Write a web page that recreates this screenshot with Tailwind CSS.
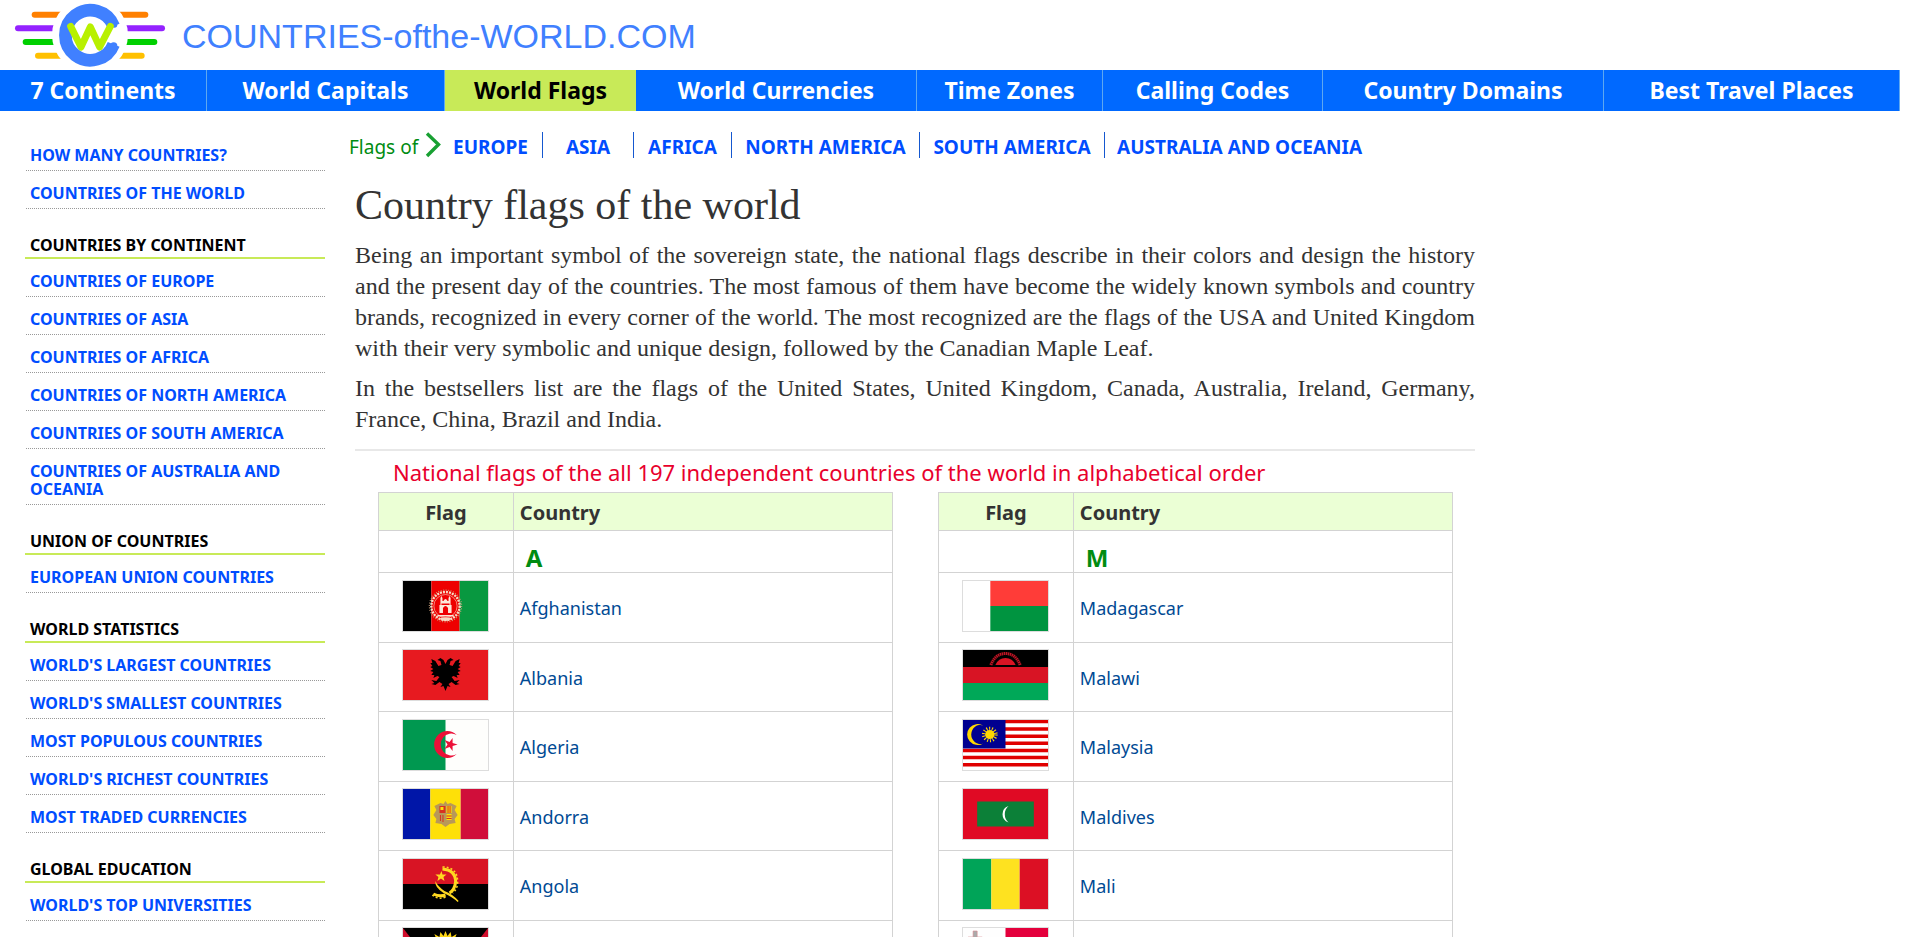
<!DOCTYPE html>
<html lang="en">
<head>
<meta charset="utf-8">
<meta name="viewport" content="width=device-width, initial-scale=1">
<title>Country flags of the world</title>
<script src="https://cdn.jsdelivr.net/npm/@tailwindcss/browser@4"></script>
</head>
<body class="bg-white font-['Noto_Sans',sans-serif] text-[#333]">

<header>
  <a href="#" class="flex h-[70px] items-center gap-0.5 text-[#4080ff]">
    <svg class="h-[70px] w-[180px] shrink-0" viewBox="0 0 540 210" aria-hidden="true">
      <g fill="none" stroke-width="18" stroke-linecap="round">
        <path stroke="#ff8000" d="M104 44H436"/>
        <path stroke="#9422ff" d="M54 85H486"/>
        <path stroke="#00d000" d="M77 126H463"/>
        <path stroke="#ffc000" d="M114 167H425"/>
      </g>
      <circle cx="270" cy="105" r="114" fill="#fff"/>
      <path d="M341 78A75 75 0 1 0 341 133" fill="none" stroke="#4080ff" stroke-width="38"/>
      <circle cx="343" cy="74" r="9" fill="#4080ff"/><circle cx="341" cy="138" r="11" fill="#4080ff"/>
      <path d="M212 79L243 141L271 81L299 141L331 79" fill="none" stroke="#b8f000" stroke-width="21" stroke-linecap="round" stroke-linejoin="round"/>
    </svg>
    <span class="pt-0.5 font-['Liberation_Sans',sans-serif] text-[34px] leading-[38px]">COUNTRIES-ofthe-WORLD.COM</span>
  </a>
  <nav class="mr-5 grid h-[41px] grid-cols-[207fr_238fr_191fr_281fr_186fr_220fr_281fr_296fr] bg-[#0069ff] text-center text-[23px] leading-[41px] font-bold whitespace-nowrap text-white">
    <a href="#" class="border-r border-[#5ea8f0]">7 Continents</a>
    <a href="#" class="border-r border-[#5ea8f0]">World Capitals</a>
    <a href="#" class="bg-[#c8ea58] text-black">World Flags</a>
    <a href="#" class="border-r border-[#5ea8f0]">World Currencies</a>
    <a href="#" class="border-r border-[#5ea8f0]">Time Zones</a>
    <a href="#" class="border-r border-[#5ea8f0]">Calling Codes</a>
    <a href="#" class="border-r border-[#5ea8f0]">Country Domains</a>
    <a href="#" class="border-r border-[#5ea8f0]">Best Travel Places</a>
  </nav>
</header>

<div class="flex items-start gap-[30px] pl-[25px]">
  <aside class="w-[300px] shrink-0 pt-[22px] text-[16px] leading-[18px] font-bold text-[#004dff]">
    <ul>
      <li class="ml-px border-b border-dotted border-[#999] pt-[13px] pb-1.5 pl-1"><a href="#">HOW MANY COUNTRIES?</a></li>
      <li class="ml-px border-b border-dotted border-[#999] pt-[13px] pb-1.5 pl-1"><a href="#">COUNTRIES OF THE WORLD</a></li>
    </ul>
    <h2 class="border-b-2 border-[#c8ea58] pt-[27px] pb-[3px] pl-[5px] text-black">COUNTRIES BY CONTINENT</h2>
    <ul>
      <li class="ml-px border-b border-dotted border-[#999] pt-[13px] pb-1.5 pl-1"><a href="#">COUNTRIES OF EUROPE</a></li>
      <li class="ml-px border-b border-dotted border-[#999] pt-[13px] pb-1.5 pl-1"><a href="#">COUNTRIES OF ASIA</a></li>
      <li class="ml-px border-b border-dotted border-[#999] pt-[13px] pb-1.5 pl-1"><a href="#">COUNTRIES OF AFRICA</a></li>
      <li class="ml-px border-b border-dotted border-[#999] pt-[13px] pb-1.5 pl-1"><a href="#">COUNTRIES OF NORTH AMERICA</a></li>
      <li class="ml-px border-b border-dotted border-[#999] pt-[13px] pb-1.5 pl-1"><a href="#">COUNTRIES OF SOUTH AMERICA</a></li>
      <li class="ml-px border-b border-dotted border-[#999] pt-[13px] pb-1.5 pl-1"><a href="#">COUNTRIES OF AUSTRALIA AND<br>OCEANIA</a></li>
    </ul>
    <h2 class="border-b-2 border-[#c8ea58] pt-[27px] pb-[3px] pl-[5px] text-black">UNION OF COUNTRIES</h2>
    <ul>
      <li class="ml-px border-b border-dotted border-[#999] pt-[13px] pb-1.5 pl-1"><a href="#">EUROPEAN UNION COUNTRIES</a></li>
    </ul>
    <h2 class="border-b-2 border-[#c8ea58] pt-[27px] pb-[3px] pl-[5px] text-black">WORLD STATISTICS</h2>
    <ul>
      <li class="ml-px border-b border-dotted border-[#999] pt-[13px] pb-1.5 pl-1"><a href="#">WORLD'S LARGEST COUNTRIES</a></li>
      <li class="ml-px border-b border-dotted border-[#999] pt-[13px] pb-1.5 pl-1"><a href="#">WORLD'S SMALLEST COUNTRIES</a></li>
      <li class="ml-px border-b border-dotted border-[#999] pt-[13px] pb-1.5 pl-1"><a href="#">MOST POPULOUS COUNTRIES</a></li>
      <li class="ml-px border-b border-dotted border-[#999] pt-[13px] pb-1.5 pl-1"><a href="#">WORLD'S RICHEST COUNTRIES</a></li>
      <li class="ml-px border-b border-dotted border-[#999] pt-[13px] pb-1.5 pl-1"><a href="#">MOST TRADED CURRENCIES</a></li>
    </ul>
    <h2 class="border-b-2 border-[#c8ea58] pt-[27px] pb-[3px] pl-[5px] text-black">GLOBAL EDUCATION</h2>
    <ul>
      <li class="ml-px border-b border-dotted border-[#999] pt-[13px] pb-1.5 pl-1"><a href="#">WORLD'S TOP UNIVERSITIES</a></li>
    </ul>
  </aside>

  <main class="max-w-[1120px] flex-1 pt-[21px]">
    <nav class="-ml-1.5 flex h-[26px] text-[19px] leading-[30px] font-bold whitespace-nowrap text-[#004dff]">
      <span class="w-[76px] font-normal text-[#008c12]">Flags of</span>
      <svg class="h-[26px] w-4 shrink-0" viewBox="0 0 16 26" fill="none" stroke="#18a032" stroke-width="3.4" aria-hidden="true"><path d="M2 1.500L13.500 12.500L2 24"/></svg>
      <a href="#" class="w-[102px] border-r border-[#1558d0] pl-3">EUROPE</a>
      <a href="#" class="w-[91px] border-r border-[#1558d0] text-center">ASIA</a>
      <a href="#" class="w-[98px] border-r border-[#1558d0] text-center">AFRICA</a>
      <a href="#" class="w-[188px] border-r border-[#1558d0] text-center">NORTH AMERICA</a>
      <a href="#" class="w-[185px] border-r border-[#1558d0] text-center">SOUTH AMERICA</a>
      <a href="#" class="pl-3">AUSTRALIA AND OCEANIA</a>
    </nav>

    <div class="font-['Liberation_Serif',serif]">
      <h1 class="mt-[23px] text-[42px] leading-[48px]">Country flags of the world</h1>
      <div class="mt-[11px] flex flex-col gap-[9px] text-justify text-[24px] leading-[31px]">
        <p>Being an important symbol of the sovereign state, the national flags describe in their colors and design the history and the present day of the countries. The most famous of them have become the widely known symbols and country brands, recognized in every corner of the world. The most recognized are the flags of the USA and United Kingdom with their very symbolic and unique design, followed by the Canadian Maple Leaf.</p>
        <p>In the bestsellers list are the flags of the United States, United Kingdom, Canada, Australia, Ireland, Germany, France, China, Brazil and India.</p>
      </div>
    </div>
    <hr class="mt-[14px] border-t-2 border-[#e8e8e8]">
    <h2 class="mt-1.5 mb-[5px] pl-[38px] text-[22px] leading-[30px] text-[#e8002c]">National flags of the all 197 independent countries of the world in alphabetical order</h2>

    <div class="flex items-start gap-[45px] pr-[22px] pl-[23px]">
      <table class="flex-1 table-fixed border-collapse text-[18px]">
        <thead>
          <tr class="h-[38px] bg-[#ebffd5] text-[20px] leading-7">
            <th class="w-[135px] border border-[#d3d3d3] pt-0.5">Flag</th>
            <th class="w-[380px] border border-[#d3d3d3] pt-0.5 pl-1.5 text-left">Country</th>
          </tr>
        </thead>
        <tbody class="text-[#004a94]">
          <tr class="h-[42px]"><td class="border border-[#d3d3d3]"></td><td class="border border-[#d3d3d3] pt-3 pl-3 text-[24px] leading-7 font-bold text-[#008c12]">A</td></tr>
          <tr class="h-[70px]">
            <td class="border border-[#d3d3d3] pb-1"><svg class="mx-auto h-[52px] w-[87px] border border-[#ddd]" viewBox="0 0 84 50" preserveAspectRatio="none" role="img" aria-label="Flag of Afghanistan">
              <path d="M0 0H28V50H0z"/><path fill="#ee0000" d="M28 0H56V50H28z"/><path fill="#089840" d="M56 0H84V50H56z"/>
              <g fill="none" stroke="#f6dcc4"><circle cx="42" cy="25" r="14" stroke-width="2.400" stroke-dasharray="2 1"/><circle cx="42" cy="25" r="16" stroke="#caa07c" stroke-dasharray="1 1.500"/><circle cx="42" cy="25" r="11.500" stroke-width=".6"/></g>
              <path fill="#fde8d8" d="M36 32V24H37V17L38 15L39 17V20H40Q42 16 44 20H45V17L46 15L47 17V24H48V32zM34 34H50V35.500H34z"/><path fill="#e00" d="M39.500 32V27Q42 23 44.500 27V32zM38 22.500H46V24H38z"/><path fill="#f6dcc4" d="M36 38Q42 42 48 38L46 36.500H38z"/>
            </svg></td>
            <td class="border border-[#d3d3d3] pt-0.5 pl-1.5"><a href="#">Afghanistan</a></td>
          </tr>
          <tr class="h-[69px]">
            <td class="border border-[#d3d3d3] pb-1"><svg class="mx-auto h-[52px] w-[87px] border border-[#ddd]" viewBox="0 0 84 50" preserveAspectRatio="none" role="img" aria-label="Flag of Albania">
              <path fill="#e71a20" d="M0 0H84V50H0z"/>
              <path d="M42 14L40 10L37 8L34 10L37 11L38 15L35 16L32 11L28 9L29 13L27 13L29 16L27 17L30 19L27 21L30 22L28 25L31 25L30 28L34 26L36 27L33 31L28 30L31 33L28 34L32 35L36 32L39 34L37 37L40 36L42 41L44 36L47 37L45 34L48 32L52 35L56 34L53 33L56 30L51 31L48 27L50 26L54 28L53 25L56 25L54 22L57 21L54 19L57 17L55 16L57 13L55 13L56 9L52 11L49 16L46 15L47 11L50 10L47 8L44 10z"/>
            </svg></td>
            <td class="border border-[#d3d3d3] pt-0.5 pl-1.5"><a href="#">Albania</a></td>
          </tr>
          <tr class="h-[70px]">
            <td class="border border-[#d3d3d3] pb-1"><svg class="mx-auto h-[52px] w-[87px] border border-[#ddd]" viewBox="0 0 84 50" preserveAspectRatio="none" role="img" aria-label="Flag of Algeria">
              <path fill="#fefefc" d="M0 0H84V50H0z"/><path fill="#009850" d="M0 0H42V50H0z"/>
              <path fill="#ec1038" d="M53 15A13 13.500 0 1 0 53 34A10.500 11 0 1 1 53 15z"/><path fill="#ec1038" d="M54 24.500L49 26L49 31L46 27L41 29L44 24.500L41 20L46 22L49 18L49 23z"/>
            </svg></td>
            <td class="border border-[#d3d3d3] pt-0.5 pl-1.5"><a href="#">Algeria</a></td>
          </tr>
          <tr class="h-[69px]">
            <td class="border border-[#d3d3d3] pb-1"><svg class="mx-auto h-[52px] w-[87px] border border-[#ddd]" viewBox="0 0 84 50" preserveAspectRatio="none" role="img" aria-label="Flag of Andorra">
              <path fill="#0016a8" d="M0 0H27V50H0z"/><path fill="#fee008" d="M27 0H57V50H27z"/><path fill="#d00e3a" d="M57 0H84V50H57z"/>
              <path fill="#b89858" d="M33 16L37 14L40 15L42 12L44 15L47 14L51 16L53 17L51 21L54 26L51 30L52 34L46 35L42 38L38 35L32 34L33 30L30 26L33 21L31 17z"/>
              <path fill="#d83020" d="M36 17H42V24H36z"/><path fill="#fee008" d="M37 18H40V21H37zM43 17H48V24H43z"/><path stroke="#d83020" d="M44.500 17V24M46.500 17V24M37 26V32M39.500 26V33"/><path fill="#fee008" d="M43 25H48V31H43z"/><path stroke="#d83020" d="M43 27H48M43 29.500H48"/>
            </svg></td>
            <td class="border border-[#d3d3d3] pt-0.5 pl-1.5"><a href="#">Andorra</a></td>
          </tr>
          <tr class="h-[70px]">
            <td class="border border-[#d3d3d3] pb-1"><svg class="mx-auto h-[52px] w-[87px] border border-[#ddd]" viewBox="0 0 84 50" preserveAspectRatio="none" role="img" aria-label="Flag of Angola">
              <path fill="#d81424" d="M0 0H84V25H0z"/><path d="M0 25H84V50H0z"/>
              <g fill="none" stroke="#ffd820"><path stroke-width="3" d="M39 10Q52 11 52 23Q51 31 46 34M42 36Q36 38 30 35"/><path stroke-width="1.500" stroke-dasharray="2 2" d="M39 8Q54 8 54 23Q54 30 49 34M42 38Q35 41 29 36"/></g>
              <path fill="#ffd820" d="M32 22Q34 27 41 32Q49 35 55 42L54 43Q49 38 40 34Q31 28 32 22zM38 12L39 15.500H43L40 18L41 22L37.500 19.500L34 22L35 18L32 15.500H36.500z"/>
            </svg></td>
            <td class="border border-[#d3d3d3] pt-0.5 pl-1.5"><a href="#">Angola</a></td>
          </tr>
          <tr class="h-[69px]">
            <td class="border border-[#d3d3d3] pb-1"><svg class="mx-auto h-[52px] w-[87px] border border-[#ddd]" viewBox="0 0 84 50" preserveAspectRatio="none" role="img" aria-label="Flag of Antigua and Barbuda">
              <path fill="#d00e2c" d="M0 0H84V50H0z"/><path d="M0 0H84L71 17H13z"/><path fill="#0070c0" d="M13 17H71L63 28H21z"/><path fill="#fff" d="M21 28H63L42 50z"/>
              <path fill="#fcd414" d="M26 17L31 14L28 10L33 11L31 6L36 9L37 4L40 8L42 3L44 8L47 4L48 9L53 6L51 11L56 10L53 14L58 17z"/>
            </svg></td>
            <td class="border border-[#d3d3d3]"></td>
          </tr>
        </tbody>
      </table>

      <table class="flex-1 table-fixed border-collapse text-[18px]">
        <thead>
          <tr class="h-[38px] bg-[#ebffd5] text-[20px] leading-7">
            <th class="w-[135px] border border-[#d3d3d3] pt-0.5">Flag</th>
            <th class="w-[380px] border border-[#d3d3d3] pt-0.5 pl-1.5 text-left">Country</th>
          </tr>
        </thead>
        <tbody class="text-[#004a94]">
          <tr class="h-[42px]"><td class="border border-[#d3d3d3]"></td><td class="border border-[#d3d3d3] pt-3 pl-3 text-[24px] leading-7 font-bold text-[#008c12]">M</td></tr>
          <tr class="h-[70px]">
            <td class="border border-[#d3d3d3] pb-1"><svg class="mx-auto h-[52px] w-[87px] border border-[#ddd]" viewBox="0 0 84 50" preserveAspectRatio="none" role="img" aria-label="Flag of Madagascar">
              <path fill="#fff" d="M0 0H84V50H0z"/><path fill="#ff3c38" d="M27 0H84V25H27z"/><path fill="#009440" d="M27 25H84V50H27z"/>
            </svg></td>
            <td class="border border-[#d3d3d3] pt-0.5 pl-1.5"><a href="#">Madagascar</a></td>
          </tr>
          <tr class="h-[69px]">
            <td class="border border-[#d3d3d3] pb-1"><svg class="mx-auto h-[52px] w-[87px] border border-[#ddd]" viewBox="0 0 84 50" preserveAspectRatio="none" role="img" aria-label="Flag of Malawi">
              <path d="M0 0H84V17H0z"/><path fill="#d81424" d="M0 17H84V33H0z"/><path fill="#00a858" d="M0 33H84V50H0z"/>
              <path fill="#d81424" d="M32 15Q35 8 42 8Q49 8 52 15z"/><path fill="none" stroke="#c01424" stroke-width="3" stroke-dasharray="1.500 .5" d="M27.500 15Q32 3.500 42 3.500Q52 3.500 56.500 15"/>
            </svg></td>
            <td class="border border-[#d3d3d3] pt-0.5 pl-1.5"><a href="#">Malawi</a></td>
          </tr>
          <tr class="h-[70px]">
            <td class="border border-[#d3d3d3] pb-1"><svg class="mx-auto h-[52px] w-[87px] border border-[#ddd]" viewBox="0 0 84 50" preserveAspectRatio="none" role="img" aria-label="Flag of Malaysia">
              <path fill="#fff" d="M0 0H84V50H0z"/><path stroke="#e00000" stroke-width="3.500" d="M0 1.500H84M0 9H84M0 16.200H84M0 23.300H84M0 30.500H84M0 37.600H84M0 44.800H84"/>
              <path fill="#000090" d="M0 0H42V28.500H0z"/><path fill="#ffd800" d="M20 5.500A10.500 10.500 0 1 0 20 23.500A9 9.500 0 1 1 20 5.500z"/>
              <circle cx="26.500" cy="14.500" r="4.600" fill="#ffd800"/><circle cx="26.500" cy="14.500" r="6" fill="none" stroke="#ffd800" stroke-width="3.500" stroke-dasharray="1 1.690"/>
            </svg></td>
            <td class="border border-[#d3d3d3] pt-0.5 pl-1.5"><a href="#">Malaysia</a></td>
          </tr>
          <tr class="h-[69px]">
            <td class="border border-[#d3d3d3] pb-1"><svg class="mx-auto h-[52px] w-[87px] border border-[#ddd]" viewBox="0 0 84 50" preserveAspectRatio="none" role="img" aria-label="Flag of Maldives">
              <path fill="#e00a24" d="M0 0H84V50H0z"/><path fill="#0c8038" d="M14 12.500H70V37.500H14z"/><path fill="#fff" d="M45 17A8.700 8.700 0 0 0 45 33.500A11 11 0 0 1 45 17z"/>
            </svg></td>
            <td class="border border-[#d3d3d3] pt-0.5 pl-1.5"><a href="#">Maldives</a></td>
          </tr>
          <tr class="h-[70px]">
            <td class="border border-[#d3d3d3] pb-1"><svg class="mx-auto h-[52px] w-[87px] border border-[#ddd]" viewBox="0 0 84 50" preserveAspectRatio="none" role="img" aria-label="Flag of Mali">
              <path fill="#00a458" d="M0 0H28V50H0z"/><path fill="#fee220" d="M28 0H56V50H28z"/><path fill="#dc1024" d="M56 0H84V50H56z"/>
            </svg></td>
            <td class="border border-[#d3d3d3] pt-0.5 pl-1.5"><a href="#">Mali</a></td>
          </tr>
          <tr class="h-[69px]">
            <td class="border border-[#d3d3d3] pb-1"><svg class="mx-auto h-[52px] w-[87px] border border-[#ddd]" viewBox="0 0 84 50" preserveAspectRatio="none" role="img" aria-label="Flag of Malta">
              <path fill="#fefefe" d="M0 0H42V50H0z"/><path fill="#e4003c" d="M42 0H84V50H42z"/><path fill="#aaa" stroke="#d88890" stroke-width=".6" d="M10 3H14V9H19V13H14V18H10V13H5V9H10z"/>
            </svg></td>
            <td class="border border-[#d3d3d3]"></td>
          </tr>
        </tbody>
      </table>
    </div>
  </main>
</div>
</body>
</html>
